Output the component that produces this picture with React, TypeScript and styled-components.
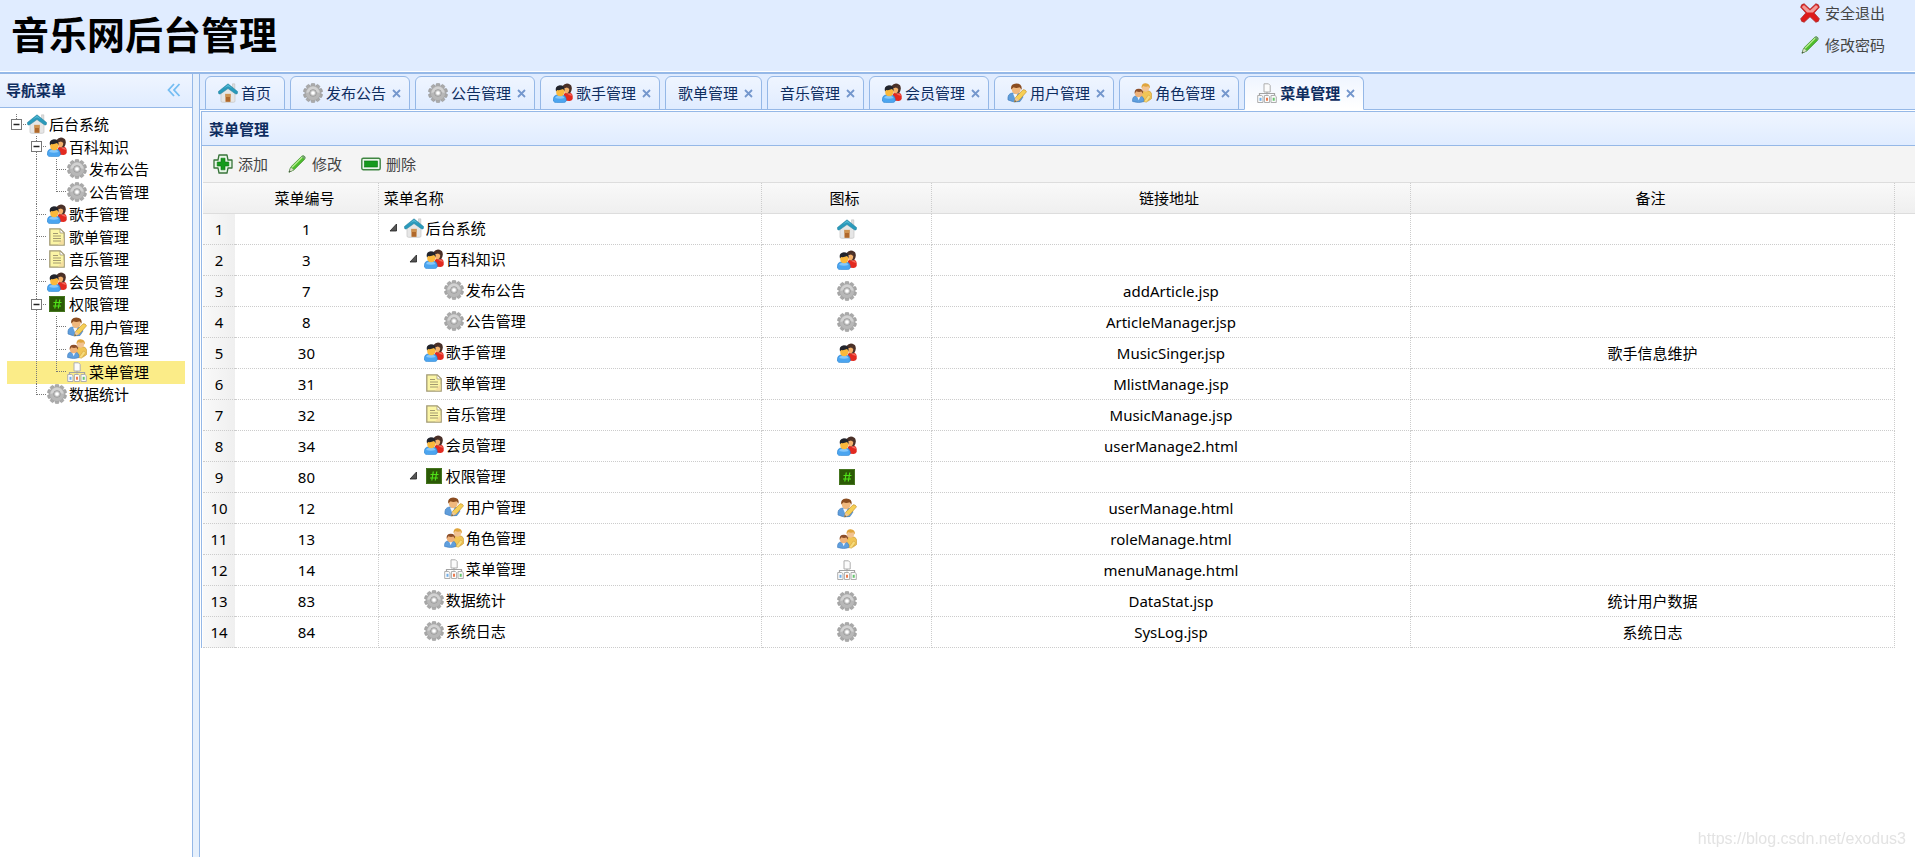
import React from 'react';
import styled, { createGlobalStyle, css } from 'styled-components';

const line = '#95b8e7';
const ink = '#0e2d5f';

const GlobalStyle = createGlobalStyle`
  *, *::before, *::after { box-sizing: border-box; }
  html, body { margin: 0; }
  body {
    background: #fff;
    color: #000;
    font: 15px/20px "Noto Sans", "Noto Sans CJK SC", sans-serif;
  }
  button {
    margin: 0;
    padding: 0;
    border: 0;
    background: none;
    color: inherit;
    font: inherit;
    cursor: pointer;
  }
  svg { display: block; flex: none; }
`;

/* ---------- icons ---------- */

type IconName =
  | 'home' | 'users' | 'gear' | 'note' | 'hash' | 'userEdit' | 'userKey'
  | 'sitemap' | 'add' | 'pencil' | 'remove' | 'cancel';

const drawings: Record<IconName, React.ReactNode> = {
  home: (
    <>
      <path d="M14.5.8h2.300v6h-2.300z" fill="#dedede" stroke="#b9b9b9" strokeWidth=".5" />
      <path d="M3 9.500 10 4l7 5.500V18q0 1.300-1.500 1.300h-11Q3 19.300 3 18z" fill="#e6e6e6" stroke="#c4c4c4" strokeWidth=".7" />
      <path d="M7 10.500h6v8.300H7z" fill="#e3cfb4" />
      <path d="M7.600 11h4.800v7.800H7.600z" fill="#b0682b" />
      <path d="M7.600 11h4.800v3H7.600z" fill="#cf9350" />
      <path d="M10 .8 19.600 8.500q.3 1.200-.4 2.200-1 .6-1.800.1L10 5.600 2.600 10.800q-.8.500-1.800-.1-.7-1-.4-2.200z" fill="#2a9abb" stroke="#217d99" strokeWidth=".5" />
      <path d="M10 1.800 5.500 5.500 10 3.200l4.500 2.300z" fill="#58bcd6" />
    </>
  ),
  users: (
    <>
      <path d="M11 17.500V11q1-2 4-2 4.700.5 4.700 4.500v2.500q-1 2-3.200 2z" fill="#e32a20" />
      <path d="M13 10h3q2.800.5 3 3-3-.5-6-3z" fill="#f4695c" />
      <path d="M9.500 3Q12-.3 15.500.7q3.500 1 3.300 5-.2 3-1.800 4.500h-4z" fill="#4a3028" />
      <ellipse cx="13.300" cy="6.600" rx="2.900" ry="3.700" fill="#f5b26c" />
      <path d="M10 3.500q2-1.500 4.500-.8 1.500.8 2 3.300l-2.500-1.500q-2 .6-4 .5z" fill="#4a3028" />
      <path d="M.4 18q-.6-6 4.600-6.200h3.500q5 .2 4.800 6.200-1 1.600-3 1.600H3.400Q1.300 19.600.4 18z" fill="#4ba5f0" stroke="#2380cf" strokeWidth=".6" />
      <path d="M2 15q1-2.300 3.500-2.300h2.500q2.500 0 3.500 2.300-4.500 1.500-9.500 0z" fill="#86c8fb" />
      <ellipse cx="7.200" cy="9" rx="4" ry="4.200" fill="#fbb93c" />
      <path d="M3 8.500Q1.500 3 6.800 2.200q5.400 0 4.800 5.800L10 6Q7 7.500 4.200 7z" fill="#22242c" />
    </>
  ),
  gear: (
    <>
      <g fill="#ababab" stroke="#8c8c8c" strokeWidth=".5">
        {[0, 36, 72, 108, 144].map((a) => (
          <rect key={a} x="8.200" y=".4" width="3.600" height="19.200" rx=".8" transform={`rotate(${a} 10 10)`} />
        ))}
      </g>
      <circle cx="10" cy="10" r="7.500" fill="#b8b8b8" stroke="#9a9a9a" strokeWidth=".4" />
      <path d="M3.500 10a6.500 6.500 0 0 1 13 0q-6.500-3-13 0z" fill="#d2d2d2" />
      <circle cx="10" cy="10" r="3.400" fill="#c8c8c8" stroke="#8f8f8f" strokeWidth=".7" />
      <circle cx="10" cy="10" r="1.800" fill="#fff" />
    </>
  ),
  note: (
    <>
      <path d="M2.800 1.800h10.400l4 4v12.400H2.800z" fill="#fbf5a5" stroke="#a39b77" strokeWidth="1.300" />
      <path d="M13 2v4h4z" fill="#fff" stroke="#a39b77" strokeWidth=".8" />
      <path d="M11 17.500h5.600V11z" fill="#f6dfa0" />
      <path d="M6 6.500h5M6 9h8M6 11.500h8M6 14h8" stroke="#a39a70" strokeWidth="1" />
    </>
  ),
  hash: (
    <>
      <path d="M2 2h16v16H2z" fill="#2c5a06" />
      <path d="M2.500 2.500h15v15h-15z" fill="none" stroke="#45751f" />
      <path d="m9.300 5.500-1.500 9M12.800 5.500l-1.500 9M6.500 8.500h8M6 12h8" stroke="#50e218" strokeWidth="1.200" />
    </>
  ),
  userEdit: (
    <>
      <path d="M1 17q-.8-6.500 4.500-7h6q3.500.5 4.500 4l-3 4.500q-6 1.500-12-1.500z" fill="#5f9ddb" stroke="#3d78b8" strokeWidth=".6" />
      <path d="m6 10.500 2.500 6 2-6z" fill="#f3f6fa" />
      <ellipse cx="9.200" cy="6.300" rx="4.400" ry="4.900" fill="#f0b87e" />
      <path d="M4.200 6.500Q3.200.8 9.200.5q6.300 0 5.400 6.300l-2-2.500q-3.500 1.200-6 0z" fill="#8b4d20" />
      <path d="m7.500 19 1-4.500L16 6.800q2.500-.5 3.500 2L12.300 17z" fill="#f6cf55" stroke="#c99631" strokeWidth=".7" />
      <path d="m7.500 19 1-4.500 3.800 2.500z" fill="#ecc79a" />
      <path d="m7.500 19 .4-1.700 1.400 1z" fill="#333" />
    </>
  ),
  userKey: (
    <>
      <path d="M9.500 14V9.500q1-1.900 4.200-1.900 5.300 0 5.900 3.400v4.500q-3 3.500-8 3z" fill="#f1c556" stroke="#c4932d" strokeWidth=".6" />
      <ellipse cx="13.500" cy="4.700" rx="3.600" ry="4" fill="#f2c391" />
      <path d="M9.500 5.200Q9.200.4 13.600.3q4.800.1 4.300 5.400l-1.500-2.400q-3 .8-5.200-.3z" fill="#dfa53e" />
      <path d="M.6 18.500Q0 13 4.500 13h4q3.500.5 3.800 5.500-5.500 2.200-11.700 0z" fill="#5f9fde" stroke="#3b79bd" strokeWidth=".6" />
      <path d="m5 13.200 1.700 4 1.700-4z" fill="#f5f7fa" />
      <ellipse cx="6.700" cy="10.300" rx="3.800" ry="4" fill="#eeb27a" />
      <path d="M2.600 10.800Q2.100 5.800 6.800 5.700q4.800.1 4.300 5.100L9.400 8.600q-2.900.8-5 -.3z" fill="#8d4f2a" />
      <path d="m11.800 18.500 4.500-6.500 2.500 1.500-4.300 5.800z" fill="#f7dc7c" stroke="#cf9f39" strokeWidth=".5" />
    </>
  ),
  sitemap: (
    <>
      <path d="M10 9v2.500M2.500 13v-2.500h15V13" fill="none" stroke="#a3a3a3" strokeWidth="1.200" />
      <g fill="#fbfbfb" stroke="#aeaeae" strokeWidth="1">
        <path d="M7 .8h4.500L13.200 2.500V9H7z" />
        <path d="M.7 12.500h4L6 13.700v5.800H.7zM7.400 12.500h4l1.200 1.200v5.800H7.400zM14 12.500h4l1.300 1.200v5.800H14z" />
      </g>
      <path d="M2.500 14.800h2v3h-2z" fill="#71aee8" />
      <path d="M9 14.800h2v3H9z" fill="#ee7a4d" />
      <path d="M15.700 14.800h2v3h-2z" fill="#66c56d" />
    </>
  ),
  add: (
    <>
      <path d="M6 1h8l1 5h4v8h-4l-1 5H6l-1-5H1V6h4z" fill="#e8f6e8" stroke="#38743a" strokeWidth="1.300" strokeLinejoin="round" />
      <path d="M8 4.200h4V8h3.800v4H12v3.800H8V12H4.200V8H8z" fill="#159a1c" stroke="#0b7412" strokeWidth=".6" />
    </>
  ),
  pencil: (
    <>
      <path d="M2 18.200 3.800 13 14.800 2.200q1.500-1 2.900.3.900 1.500-.1 2.700L6.700 16z" fill="#4fbf2c" stroke="#3c8f2a" strokeWidth=".9" strokeLinejoin="round" />
      <path d="M5 13.200 15.300 3" stroke="#b6ec92" strokeWidth="1.300" />
      <path d="M2 18.200 3.800 13l2.900 3z" fill="#dfe3cc" stroke="#7d9d74" strokeWidth=".6" />
      <path d="m2 18.200.6-1.800 1.200 1.200z" fill="#333" />
      <path d="m14.600 2.400 3 2.800q1.200-1.500 0-2.800-1.500-1.100-3 0z" fill="#7a9c7a" />
    </>
  ),
  remove: (
    <>
      <rect x=".8" y="4.300" width="18.400" height="11.400" rx="1.500" fill="#e9f6e9" stroke="#3f8642" strokeWidth="1.400" />
      <rect x="3.500" y="7" width="13" height="6" fill="#159a1c" stroke="#0b7412" strokeWidth=".6" />
    </>
  ),
  cancel: (
    <>
      <path d="m4.200.8 5.800 5.400L15.800.8q3.200 0 3.500 3.500L14.200 10l5.100 5.700q-.3 3.500-3.500 3.500L10 13.800l-5.800 5.400q-3.200 0-3.500-3.500L5.800 10 .7 4.300Q1 .8 4.200.8z" fill="#dd1a1a" stroke="#a93737" strokeWidth=".8" strokeLinejoin="round" />
      <path d="m4.200 2.200 5.800 5.400 5.800-5.400q1.900.2 2.200 2L13 9.400H7L2 4.200q.3-1.800 2.200-2z" fill="#f29b98" />
    </>
  ),
};

const Icon = ({ name }: { name: IconName }) => (
  <svg width="20" height="20" viewBox="0 0 20 20" fill="none" aria-hidden="true">
    {drawings[name]}
  </svg>
);

const CloseMark = () => (
  <svg width="9" height="9" viewBox="0 0 9 9" aria-hidden="true">
    <path d="m1 1 7 7M8 1 1 8" stroke="#7497cd" strokeWidth="1.800" />
  </svg>
);

const FoldArrow = () => (
  <svg width="20" height="20" viewBox="0 0 20 20" aria-hidden="true">
    <path d="M12.500 6v7h-6.500z" fill="#555" stroke="#222" strokeWidth=".8" strokeLinejoin="round" />
  </svg>
);

/* ---------- page frame ---------- */

const Page = styled.div`
  display: flex;
  flex-direction: column;
  min-height: 100vh;
  background: #e6f0fc;
`;

const Banner = styled.header`
  display: flex;
  justify-content: space-between;
  height: 74px;
  padding: 0 30px 0 11px;
  background: #e0ecff;
  border-bottom: 2px solid ${line};
  box-shadow: inset 0 -1px #fff;
`;

const SiteTitle = styled.h1`
  margin: 0;
  font-size: 38px;
  line-height: 68px;
`;

const AccountLinks = styled.nav`
  display: flex;
  flex-direction: column;
  gap: 12px;
  padding-top: 3px;
`;

const IconLink = styled.a`
  display: flex;
  gap: 5px;
  color: #444;
  text-decoration: none;
`;

const Body = styled.div`
  display: flex;
  flex: 1;
  gap: 6px;
`;

const headBar = css`
  display: flex;
  align-items: center;
  justify-content: space-between;
  height: 34px;
  border-bottom: 1px solid ${line};
  background: linear-gradient(#eff5ff, #e0ecff);
  color: ${ink};
`;

const HeadTitle = styled.h2`
  margin: 0;
  font-size: 15px;
  line-height: 20px;
`;

/* ---------- sidebar ---------- */

const Sidebar = styled.aside`
  flex: none;
  width: 193px;
  border-right: 1px solid ${line};
  background: #fff;
`;

const SidebarHead = styled.div`
  ${headBar}
  padding: 0 11px 2px 6px;
`;

const Tree = styled.ul`
  margin: 0;
  padding: 6px 7px;
  list-style: none;
`;

const TreeRow = styled.li<{ $active?: boolean }>`
  display: flex;
  align-items: center;
  height: 22px;
  overflow: hidden;
  background: ${(p) => (p.$active ? '#fbec88' : 'none')};
  &:nth-child(even) { height: 23px; }
`;

const TreeLink = styled.a`
  display: flex;
  align-items: center;
  gap: 2px;
  height: 22px;
  padding-bottom: 2px;
  color: #000;
  text-decoration: none;
  white-space: nowrap;
`;

type Joint = 'root' | 'open' | 'line' | 'tee' | 'end' | 'blank';

const JointMark = ({ kind }: { kind: Joint }) => {
  const boxed = kind === 'root' || kind === 'open';
  const runsDown = kind === 'open' || kind === 'line' || kind === 'tee';
  return (
    <svg width="20" height="23" viewBox="0 0 20 23" aria-hidden="true">
      <g stroke="#777" strokeDasharray="1 1">
        {kind !== 'blank' && <path d={runsDown ? 'M9.500 0v23' : 'M9.500 0v11'} />}
        {kind !== 'line' && kind !== 'blank' && <path d="M10 10.500h10" />}
      </g>
      {boxed && (
        <>
          <rect x="4.500" y="5.500" width="10" height="10" fill="#fff" stroke="#777" />
          <path d="M6.500 10.500h6" stroke="#222" strokeWidth="1.500" />
        </>
      )}
    </svg>
  );
};

interface TreeItem { text: string; icon: IconName; joints: Joint[]; active?: boolean }

const treeItems: TreeItem[] = [
  { text: '后台系统', icon: 'home', joints: ['root'] },
  { text: '百科知识', icon: 'users', joints: ['blank', 'open'] },
  { text: '发布公告', icon: 'gear', joints: ['blank', 'line', 'tee'] },
  { text: '公告管理', icon: 'gear', joints: ['blank', 'line', 'end'] },
  { text: '歌手管理', icon: 'users', joints: ['blank', 'tee'] },
  { text: '歌单管理', icon: 'note', joints: ['blank', 'tee'] },
  { text: '音乐管理', icon: 'note', joints: ['blank', 'tee'] },
  { text: '会员管理', icon: 'users', joints: ['blank', 'tee'] },
  { text: '权限管理', icon: 'hash', joints: ['blank', 'open'] },
  { text: '用户管理', icon: 'userEdit', joints: ['blank', 'line', 'tee'] },
  { text: '角色管理', icon: 'userKey', joints: ['blank', 'line', 'tee'] },
  { text: '菜单管理', icon: 'sitemap', joints: ['blank', 'line', 'end'], active: true },
  { text: '数据统计', icon: 'gear', joints: ['blank', 'end'] },
];

/* ---------- tabs ---------- */

const Main = styled.main`
  flex: 1;
  min-width: 0;
  border-left: 1px solid ${line};
  background: #fff;
`;

const TabStrip = styled.div`
  display: flex;
  gap: 5px;
  height: 36px;
  padding: 2px 5px 0;
  background: #e0ecff;
  border-bottom: 1px solid ${line};
`;

const Tab = styled.div<{ $active?: boolean }>`
  display: flex;
  align-items: center;
  height: 34px;
  padding: 0 8px 0 12px;
  border: 1px solid ${line};
  border-bottom-color: ${(p) => (p.$active ? '#fff' : line)};
  border-radius: 6px 6px 0 0;
  background: ${(p) => (p.$active ? 'linear-gradient(#eff5ff, #fff)' : 'linear-gradient(#eff5ff, #e0ecff)')};
  color: ${ink};
  font-weight: ${(p) => (p.$active ? 700 : 400)};
`;

const TabLabel = styled.button<{ $last?: boolean }>`
  display: flex;
  align-items: center;
  gap: 3px;
  padding-right: ${(p) => (p.$last ? 5 : 6)}px;
  white-space: nowrap;
`;

interface TabItem { text: string; icon?: IconName; fixed?: boolean; active?: boolean }

const tabs: TabItem[] = [
  { text: '首页', icon: 'home', fixed: true },
  { text: '发布公告', icon: 'gear' },
  { text: '公告管理', icon: 'gear' },
  { text: '歌手管理', icon: 'users' },
  { text: '歌单管理' },
  { text: '音乐管理' },
  { text: '会员管理', icon: 'users' },
  { text: '用户管理', icon: 'userEdit' },
  { text: '角色管理', icon: 'userKey' },
  { text: '菜单管理', icon: 'sitemap', active: true },
];

/* ---------- panel and grid ---------- */

const Panel = styled.section`
  margin: 1px 0 0 1px;
  border: 1px solid ${line};
  border-width: 1px 0 0 1px;
`;

const PanelHead = styled.div`
  ${headBar}
  padding: 0 7px;
`;

const PanelBody = styled.div`
  padding-left: 1px;
`;

const Toolbar = styled.div`
  display: flex;
  align-items: center;
  gap: 19px;
  height: 37px;
  padding: 0 10px;
  border-bottom: 1px solid #ddd;
  background: #f4f4f4;
`;

const ToolButton = styled.button`
  display: flex;
  gap: 5px;
  color: #444;
`;

const Grid = styled.table`
  width: 100%;
  table-layout: fixed;
  border-collapse: separate;
  border-spacing: 0;
`;

const HeadCell = styled.th<{ $left?: boolean; $plain?: boolean }>`
  height: 31px;
  padding: 0 9px 0 5px;
  border-bottom: 1px solid #ddd;
  border-right: ${(p) => (p.$plain ? '0' : '1px dotted #ccc')};
  background: linear-gradient(#f9f9f9, #efefef);
  font-weight: 400;
  text-align: ${(p) => (p.$left ? 'left' : 'center')};
`;

const Cell = styled.td<{ $left?: boolean }>`
  height: 31px;
  padding: 0 5px;
  border: 1px dotted #ccc;
  border-width: 0 1px 1px 0;
  text-align: ${(p) => (p.$left ? 'left' : 'center')};
  & > svg { margin: 0 auto; }
`;

const NumberCell = styled(Cell)`
  padding: 0;
  border-right: 0;
  background: linear-gradient(to right, #f9f9f9, #efefef);
`;

const NameBox = styled.div<{ $level: number }>`
  display: flex;
  align-items: center;
  padding: 0 0 2px ${(p) => p.$level * 20}px;
`;

const FoldSlot = styled.span`
  flex: none;
  width: 20px;
`;

const NameText = styled.span`
  padding-left: 2px;
`;

interface MenuRow {
  id: number; name: string; icon: IconName; level: number;
  folder?: boolean; noIcon?: boolean; url?: string; note?: string;
}

const rows: MenuRow[] = [
  { id: 1, name: '后台系统', icon: 'home', level: 0, folder: true },
  { id: 3, name: '百科知识', icon: 'users', level: 1, folder: true },
  { id: 7, name: '发布公告', icon: 'gear', level: 2, url: 'addArticle.jsp' },
  { id: 8, name: '公告管理', icon: 'gear', level: 2, url: 'ArticleManager.jsp' },
  { id: 30, name: '歌手管理', icon: 'users', level: 1, url: 'MusicSinger.jsp', note: '歌手信息维护' },
  { id: 31, name: '歌单管理', icon: 'note', level: 1, noIcon: true, url: 'MlistManage.jsp' },
  { id: 32, name: '音乐管理', icon: 'note', level: 1, noIcon: true, url: 'MusicManage.jsp' },
  { id: 34, name: '会员管理', icon: 'users', level: 1, url: 'userManage2.html' },
  { id: 80, name: '权限管理', icon: 'hash', level: 1, folder: true },
  { id: 12, name: '用户管理', icon: 'userEdit', level: 2, url: 'userManage.html' },
  { id: 13, name: '角色管理', icon: 'userKey', level: 2, url: 'roleManage.html' },
  { id: 14, name: '菜单管理', icon: 'sitemap', level: 2, url: 'menuManage.html' },
  { id: 83, name: '数据统计', icon: 'gear', level: 1, url: 'DataStat.jsp', note: '统计用户数据' },
  { id: 84, name: '系统日志', icon: 'gear', level: 1, url: 'SysLog.jsp', note: '系统日志' },
];

const ColNumber = styled.col`width: 32px;`;
const ColId = styled.col`width: 8.4%;`;
const ColName = styled.col`width: 22.4%;`;
const ColIcon = styled.col`width: 9.9%;`;
const ColUrl = styled.col`width: 28%;`;
const ColGutter = styled.col`width: 20px;`;

const Watermark = styled.div`
  position: fixed;
  right: 9px;
  bottom: 8px;
  color: #e3e3e3;
  font: 16px/20px "Liberation Sans", sans-serif;
`;

export default function App() {
  return (
    <Page>
      <GlobalStyle />
      <Banner>
        <SiteTitle>音乐网后台管理</SiteTitle>
        <AccountLinks>
          <IconLink href="#logout"><Icon name="cancel" />安全退出</IconLink>
          <IconLink href="#password"><Icon name="pencil" />修改密码</IconLink>
        </AccountLinks>
      </Banner>
      <Body>
        <Sidebar>
          <SidebarHead>
            <HeadTitle>导航菜单</HeadTitle>
            <button type="button" aria-label="collapse">
              <svg width="14" height="14" viewBox="0 0 14 14" fill="none" aria-hidden="true">
                <path d="M7 1 1.500 7 7 13M12.500 1 7 7l5.500 6" stroke="#74bdf2" strokeWidth="1.800" />
              </svg>
            </button>
          </SidebarHead>
          <Tree>
            {treeItems.map((item, i) => (
              <TreeRow key={i} $active={item.active}>
                {item.joints.map((kind, j) => <JointMark key={j} kind={kind} />)}
                <TreeLink href="#menu"><Icon name={item.icon} />{item.text}</TreeLink>
              </TreeRow>
            ))}
          </Tree>
        </Sidebar>
        <Main>
          <TabStrip>
            {tabs.map((tab) => (
              <Tab key={tab.text} $active={tab.active}>
                <TabLabel type="button" $last={tab.fixed}>
                  {tab.icon && <Icon name={tab.icon} />}
                  {tab.text}
                </TabLabel>
                {!tab.fixed && <button type="button" aria-label="close"><CloseMark /></button>}
              </Tab>
            ))}
          </TabStrip>
          <Panel>
            <PanelHead><HeadTitle>菜单管理</HeadTitle></PanelHead>
            <PanelBody>
              <Toolbar>
                <ToolButton type="button"><Icon name="add" />添加</ToolButton>
                <ToolButton type="button"><Icon name="pencil" />修改</ToolButton>
                <ToolButton type="button"><Icon name="remove" />删除</ToolButton>
              </Toolbar>
              <Grid>
                <colgroup>
                  <ColNumber /><ColId /><ColName /><ColIcon /><ColUrl /><col /><ColGutter />
                </colgroup>
                <thead>
                  <tr>
                    <HeadCell $plain />
                    <HeadCell>菜单编号</HeadCell>
                    <HeadCell $left>菜单名称</HeadCell>
                    <HeadCell>图标</HeadCell>
                    <HeadCell>链接地址</HeadCell>
                    <HeadCell>备注</HeadCell>
                    <HeadCell $plain />
                  </tr>
                </thead>
                <tbody>
                  {rows.map((row, i) => (
                    <tr key={row.id}>
                      <NumberCell>{i + 1}</NumberCell>
                      <Cell>{row.id}</Cell>
                      <Cell $left>
                        <NameBox $level={row.level}>
                          <FoldSlot>{row.folder && <FoldArrow />}</FoldSlot>
                          <Icon name={row.icon} />
                          <NameText>{row.name}</NameText>
                        </NameBox>
                      </Cell>
                      <Cell>{!row.noIcon && <Icon name={row.icon} />}</Cell>
                      <Cell>{row.url}</Cell>
                      <Cell>{row.note}</Cell>
                      <td />
                    </tr>
                  ))}
                </tbody>
              </Grid>
            </PanelBody>
          </Panel>
        </Main>
      </Body>
      <Watermark>https://blog.csdn.net/exodus3</Watermark>
    </Page>
  );
}
